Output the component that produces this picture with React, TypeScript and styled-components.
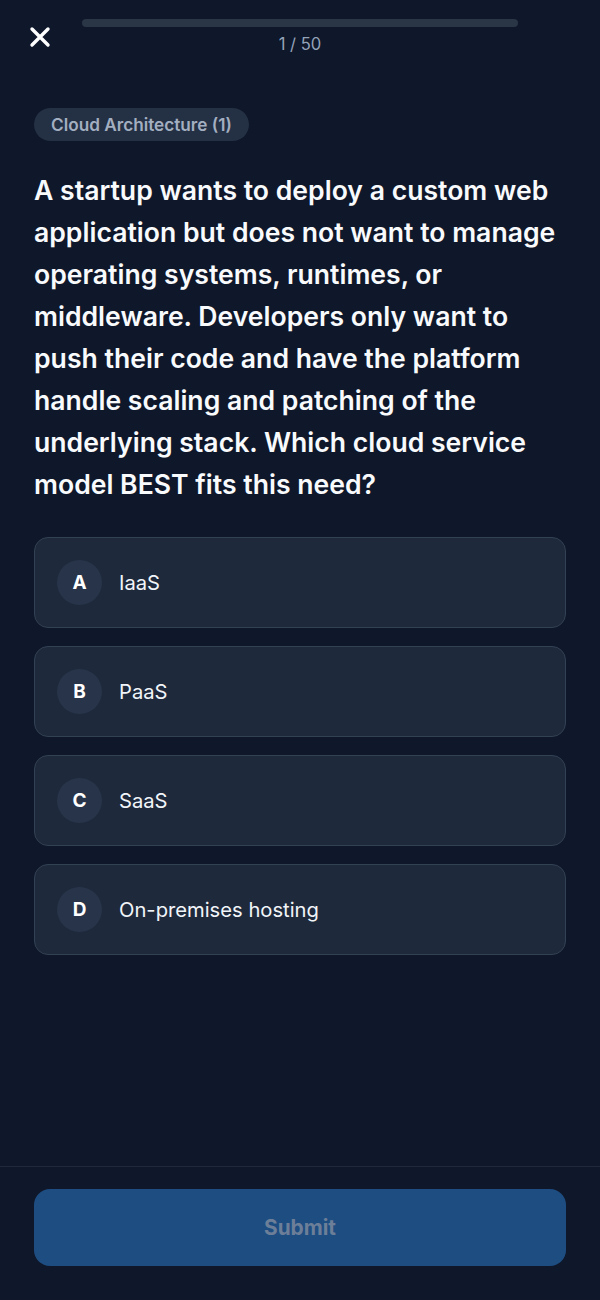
import React from "react";
import styled, { createGlobalStyle } from "styled-components";

const GlobalStyle = createGlobalStyle`
  html, body {
    margin: 0;
    padding: 0;
    background: #0f172a;
  }
  body {
    font-family: Inter, "Noto Sans", "Liberation Sans", sans-serif;
    -webkit-font-smoothing: antialiased;
  }
  * {
    box-sizing: border-box;
  }
`;

const options = [
  { letter: "A", label: "IaaS" },
  { letter: "B", label: "PaaS" },
  { letter: "C", label: "SaaS" },
  { letter: "D", label: "On-premises hosting" },
];

const App = () => {
  const current = 1;
  const total = 50;

  return (
    <>
      <GlobalStyle />
      <Screen>
        <Header>
          <CloseBtn aria-label="Close">
            <svg width="22" height="22" viewBox="0 0 22 22" fill="none">
              <path
                d="M3 3L19 19M19 3L3 19"
                stroke="#ffffff"
                strokeWidth="3.4"
                strokeLinecap="round"
              />
            </svg>
          </CloseBtn>
          <Progress>
            <Track>
              <Fill style={{ width: `${(0 / total) * 100}%` }} />
            </Track>
            <Counter>
              {current} / {total}
            </Counter>
          </Progress>
          <Spacer />
        </Header>

        <Body>
          <Chip>Cloud Architecture (1)</Chip>
          <Question>
            A startup wants to deploy a custom web application but does not
            want to manage operating systems, runtimes, or middleware.
            Developers only want to push their code and have the platform
            handle scaling and patching of the underlying stack. Which cloud
            service model BEST fits this need?
          </Question>
          <Options>
            {options.map((o) => (
              <Option key={o.letter}>
                <Letter>{o.letter}</Letter>
                <OptionText>{o.label}</OptionText>
              </Option>
            ))}
          </Options>
        </Body>

        <Footer>
          <SubmitBtn disabled>Submit</SubmitBtn>
        </Footer>
      </Screen>
    </>
  );
};

export default App;

const Screen = styled.div`
  width: 600px;
  height: 1300px;
  display: flex;
  flex-direction: column;
  background: #0f172a;
`;

const Header = styled.div`
  display: flex;
  align-items: flex-start;
  gap: 32px;
  padding: 19px 30px 0;
`;

const CloseBtn = styled.button`
  width: 20px;
  height: 20px;
  margin-top: 8px;
  padding: 0;
  border: none;
  background: transparent;
  display: flex;
  align-items: center;
  justify-content: center;
  cursor: pointer;
  svg {
    flex-shrink: 0;
  }
`;

const Spacer = styled.div`
  width: 20px;
`;

const Progress = styled.div`
  flex: 1;
  display: flex;
  flex-direction: column;
  align-items: center;
  gap: 7px;
`;

const Track = styled.div`
  width: 100%;
  height: 8px;
  border-radius: 4px;
  background: #2a3546;
  overflow: hidden;
`;

const Fill = styled.div`
  height: 100%;
  background: #3b82f6;
`;

const Counter = styled.div`
  font-size: 16.6px;
  line-height: 20px;
  color: #94a3b8;
`;

const Body = styled.div`
  flex: 1;
  padding: 54px 34px 0;
  display: flex;
  flex-direction: column;
`;

const Chip = styled.div`
  align-self: flex-start;
  height: 33px;
  padding: 0 17px;
  border-radius: 17px;
  background: #243044;
  color: #a3afc0;
  font-size: 17.2px;
  font-weight: 600;
  display: flex;
  align-items: center;
`;

const Question = styled.h1`
  margin: 28px 0 0;
  font-size: 26.6px;
  line-height: 42px;
  font-weight: 600;
  color: #f8fafc;
  letter-spacing: 0;
`;

const Options = styled.div`
  margin-top: 32px;
  display: flex;
  flex-direction: column;
  gap: 18px;
`;

const Option = styled.div`
  height: 91px;
  display: flex;
  align-items: center;
  gap: 17px;
  padding: 0 22px;
  border: 1px solid #334155;
  border-radius: 14px;
  background: #1e293b;
  cursor: pointer;
`;

const Letter = styled.div`
  width: 45px;
  height: 45px;
  border-radius: 50%;
  background: #27344a;
  color: #ffffff;
  font-size: 19px;
  font-weight: 700;
  display: flex;
  align-items: center;
  justify-content: center;
`;

const OptionText = styled.span`
  font-size: 20.2px;
  color: #f1f5f9;
`;

const Footer = styled.div`
  border-top: 1px solid #1e293b;
  padding: 22px 34px 34px;
`;

const SubmitBtn = styled.button`
  width: 100%;
  height: 77px;
  border: none;
  border-radius: 16px;
  background: #1e4d82;
  color: #6d7f98;
  font-family: inherit;
  font-size: 20.8px;
  font-weight: 700;
  cursor: not-allowed;
`;
